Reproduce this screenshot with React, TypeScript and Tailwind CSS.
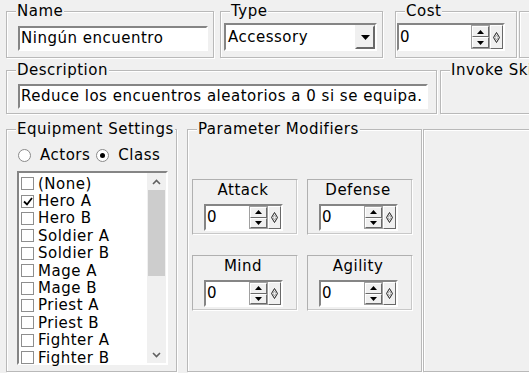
import React from "react";

const classes = [
  "(None)",
  "Hero A",
  "Hero B",
  "Soldier A",
  "Soldier B",
  "Mage A",
  "Mage B",
  "Priest A",
  "Priest B",
  "Fighter A",
  "Fighter B",
];

const sunken =
  "border-2 border-t-[#858585] border-l-[#858585] border-b-white border-r-white bg-white";
const raised =
  "border border-t-white border-l-white border-b-[#696969] border-r-[#696969] bg-[#f0f0f0]";

function Group({ label, className, children }: { label?: string; className: string; children?: React.ReactNode }) {
  return (
    <fieldset className={"border border-[#b9b9b9] shadow-[inset_1px_1px_0_#fff,1px_1px_0_#fff] " + className}>
      {label && <legend className="ml-[9px] px-[1px] leading-[16px] bg-[#f0f0f0] whitespace-nowrap">{label}</legend>}
      {children}
    </fieldset>
  );
}

function Diamond() {
  return (
    <svg width="7" height="11" viewBox="0 0 7 11">
      <path d="M3.5 0.5 L6.5 5.5 L3.5 10.5 L0.5 5.5 Z" fill="none" stroke="#222" strokeWidth="1" />
      <path d="M3.5 3 L5 5.5 L3.5 8 L2 5.5 Z" fill="none" stroke="#999" strokeWidth="0.8" />
    </svg>
  );
}

function Spin({ className }: { className: string }) {
  return (
    <div className={"flex " + sunken + " " + className}>
      <div className="flex-1 flex items-center pl-[1px]">0</div>
      <div className="w-[19px] flex flex-col border border-[#a0a0a0] bg-[#f0f0f0]">
        <div className={"flex-1 flex items-center justify-center " + raised}>
          <svg width="7" height="4" viewBox="0 0 7 4"><path d="M0 4 L3.5 0 L7 4 Z" fill="#000" /></svg>
        </div>
        <div className={"flex-1 flex items-center justify-center " + raised}>
          <svg width="7" height="4" viewBox="0 0 7 4"><path d="M0 0 L3.5 4 L7 0 Z" fill="#000" /></svg>
        </div>
      </div>
      <div className={"w-[13px] flex items-center justify-center " + raised}>
        <Diamond />
      </div>
    </div>
  );
}

function ParamBox({ label }: { label: string }) {
  return (
    <div className="w-[106px] h-[56px] border border-t-[#b0b0b0] border-l-[#b0b0b0] border-b-white border-r-white shadow-[inset_-1px_-1px_0_#c8c8c8] flex flex-col">
      <div className="text-center leading-[16px] mt-[2px] pr-[4px]">{label}</div>
      <Spin className="ml-[11px] mt-[6px] w-[79px] h-[27px]" />
    </div>
  );
}

export default function App() {
  return (
    <div className="w-[529px] h-[373px] overflow-hidden bg-[#f0f0f0] text-black font-['DejaVu_Sans',sans-serif] text-[15px] tracking-[0.5px] pl-[6px] pt-[3px]">
      {/* top row */}
      <div className="flex w-[600px]">
        <Group label="Name" className="w-[208px] h-[55px] shrink-0">
          <div className={"ml-[11px] mt-[7px] w-[190px] h-[25px] flex items-center pl-[1px] " + sunken}>
            Ningún encuentro
          </div>
        </Group>
        <Group label="Type" className="ml-[6px] w-[163px] h-[55px] shrink-0">
          <div className={"ml-[3px] mt-[4px] w-[153px] h-[28px] flex " + sunken}>
            <div className="flex-1 flex items-center pl-[2px]">Accessory</div>
            <div className="w-[20px] flex items-center justify-center border-2 border-t-[#f0f0f0] border-l-[#f0f0f0] border-b-[#696969] border-r-[#696969] bg-[#f0f0f0]">
              <svg width="9" height="5" viewBox="0 0 9 5"><path d="M0 0 L9 0 L4.5 5 Z" fill="#000" /></svg>
            </div>
          </div>
        </Group>
        <Group label="Cost" className="ml-[12px] w-[122px] h-[55px] shrink-0">
          <Spin className="ml-[1px] mt-[4px] w-[108px] h-[28px]" />
        </Group>
        <Group className="ml-[2px] w-[40px] h-[47px] mt-[8px] shrink-0" />
      </div>

      {/* description row */}
      <div className="flex w-[600px] mt-[4px]">
        <Group label="Description" className="w-[431px] h-[52px] shrink-0">
          <div className={"ml-[11px] mt-[6px] w-[410px] h-[25px] flex items-center pl-[1px] " + sunken}>
            Reduce los encuentros aleatorios a 0 si se equipa.
          </div>
        </Group>
        <Group label="Invoke Skill" className="ml-[3px] w-[140px] h-[52px] shrink-0" />
      </div>

      {/* bottom row */}
      <div className="flex w-[600px] mt-[7px]">
        <Group label="Equipment Settings" className="w-[171px] h-[251px] shrink-0">
          <div className="flex items-center ml-[11px] mt-[10px] h-[16px]">
            <span className="w-[13px] h-[13px] rounded-full border border-[#8a8a8a] bg-white" />
            <span className="ml-[9px]">Actors</span>
            <span className="ml-[6px] w-[13px] h-[13px] rounded-full border border-[#8a8a8a] bg-white flex items-center justify-center">
              <span className="w-[5px] h-[5px] rounded-full bg-black" />
            </span>
            <span className="ml-[9px]">Class</span>
          </div>
          <div className={"ml-[10px] mt-[8px] w-[151px] h-[194px] flex " + sunken}>
            <div className="flex-1 pt-[2px] pl-[2px]">
              {classes.map((c, i) => (
                <div key={c} className="h-[17.4px] flex items-center gap-[4px]">
                  <span className="w-[13px] h-[13px] border border-[#8e8e8e] bg-white flex items-center justify-center">
                    {i === 1 && (
                      <svg width="10" height="9" viewBox="0 0 10 9">
                        <path d="M1 4.5 L4 7.5 L9 1" fill="none" stroke="#000" strokeWidth="1.8" />
                      </svg>
                    )}
                  </span>
                  <span className="leading-[16px]">{c}</span>
                </div>
              ))}
            </div>
            <div className="w-[19px] flex flex-col bg-[#f0f0f0]">
              <div className="h-[17px] flex items-center justify-center">
                <svg width="9" height="6" viewBox="0 0 9 6"><path d="M1 5 L4.5 1.5 L8 5" fill="none" stroke="#606060" strokeWidth="1.6" /></svg>
              </div>
              <div className="mx-[1px] h-[86px] bg-[#cdcdcd]" />
              <div className="flex-1" />
              <div className="h-[17px] flex items-center justify-center">
                <svg width="9" height="6" viewBox="0 0 9 6"><path d="M1 1 L4.5 4.5 L8 1" fill="none" stroke="#606060" strokeWidth="1.6" /></svg>
              </div>
            </div>
          </div>
        </Group>
        <Group label="Parameter Modifiers" className="ml-[10px] w-[235px] h-[251px] shrink-0">
          <div className="grid grid-cols-[106px_106px] gap-x-[9px] gap-y-[20px] ml-[4px] mt-[42px]">
            <ParamBox label="Attack" />
            <ParamBox label="Defense" />
            <ParamBox label="Mind" />
            <ParamBox label="Agility" />
          </div>
        </Group>
        <Group className="ml-[1px] mt-[8px] w-[140px] h-[243px] shrink-0" />
      </div>
    </div>
  );
}
